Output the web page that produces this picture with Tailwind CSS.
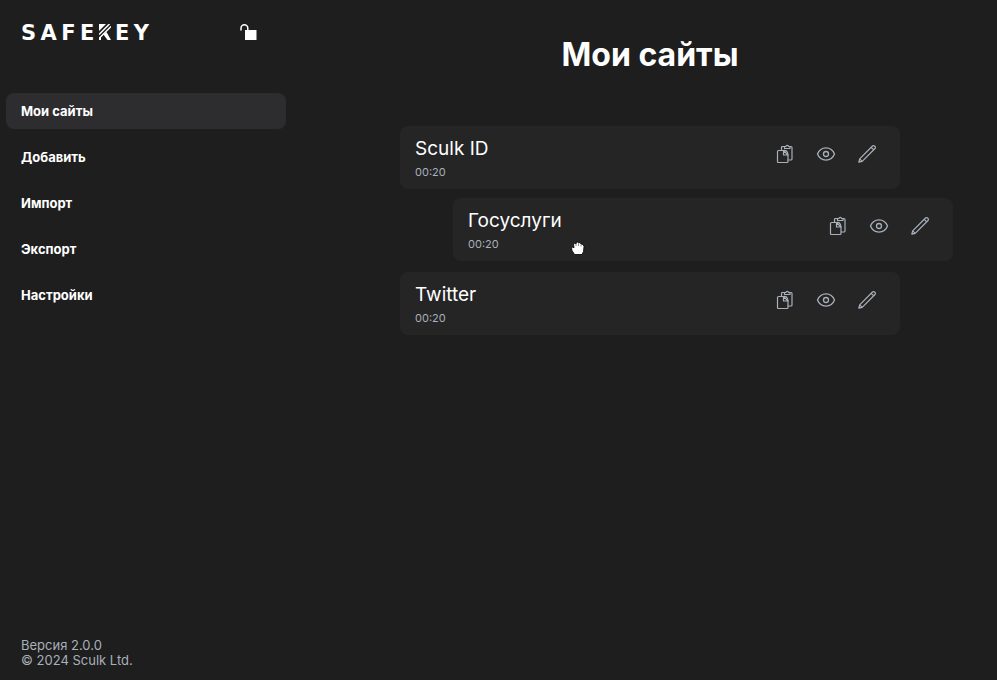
<!DOCTYPE html>
<html lang="ru">
<head>
<meta charset="utf-8">
<meta name="viewport" content="width=device-width, initial-scale=1">
<title>SafeKey</title>
<script src="https://cdn.jsdelivr.net/npm/@tailwindcss/browser@4"></script>
</head>
<body class="flex min-h-screen bg-[#1e1e1e] font-['Inter',sans-serif] text-white">
<svg class="hidden" aria-hidden="true">
  <symbol id="copy" viewBox="0 0 20 20" fill="none" stroke="currentColor" stroke-width="1.2" stroke-linejoin="round" stroke-linecap="round">
    <path d="M3.500 6.500H8.500L13 11V17.500Q13 18.500 12 18.500H3.500Q2.500 18.500 2.500 17.500V7.500Q2.500 6.500 3.500 6.500zM8.500 6.500V11H13"/>
    <path d="M6.500 6.300V3.500Q6.500 2.500 7.500 2.500H9.500M15 2.500h1q1 0 1 1V15q0 1-1 1H13.200M8.500 6.500Q11.500 6 12.500 8.500L13 11"/>
    <path d="M9.500 4.500V2.500h1.300a1.500 1.500 0 0 1 2.900 0H15v2z"/>
  </symbol>
  <symbol id="eye" viewBox="0 0 20 20" fill="none" stroke="currentColor" stroke-width="1.3">
    <path d="M1.500 10C3 6.200 6.200 3.900 10 3.900s7 2.300 8.500 6.100c-1.500 3.800-4.700 6.100-8.500 6.100S3 13.800 1.500 10z"/>
    <circle cx="10" cy="10" r="2.500"/>
  </symbol>
  <symbol id="pencil" viewBox="0 0 20 20" fill="none" stroke="currentColor" stroke-width="1.2" stroke-linejoin="round">
    <path d="M1.800 18.200l.9-3.400L15.500 2a1.400 1.400 0 0 1 2 0l.5.500a1.400 1.400 0 0 1 0 2L5.200 17.300zM14.200 3.300l2.500 2.500M2.700 14.800l2.500 2.500"/>
  </symbol>
</svg>

<aside class="flex w-[303px] shrink-0 flex-col pr-[17px] pl-1.5">
  <header class="flex h-[65px] items-center justify-between pt-0.5 pr-[29px] pl-[15px]">
    <a href="#" aria-label="SafeKey" class="flex w-32 items-baseline justify-between font-['DejaVu_Sans',sans-serif] text-[21px] leading-none font-bold">
      <span>S</span><span>A</span><span>F</span><span>E</span>
      <svg class="h-4 w-3" viewBox="0 0 12 16" fill="none" stroke="currentColor" aria-hidden="true">
        <path d="M0 0h7L0 7z" fill="currentColor" stroke="none"/>
        <path d="M0 10.500L10.500 0M0 14.500L12 2.500" stroke-width="1.500"/>
        <path d="M4.500 10.500l4 5.500H12L7.500 8z" fill="currentColor" stroke="none"/>
        <path d="M1 13v3" stroke-width="2"/>
      </svg>
      <span>E</span><span>Y</span>
    </a>
    <button type="button" aria-label="Заблокировать" class="cursor-pointer pb-0.5">
      <svg class="h-[17px] w-[17px]" viewBox="0 0 17 17" fill="none" aria-hidden="true">
        <path d="M1 6.500V4.200a3.400 3.400 0 0 1 6.800 0V8" stroke="currentColor" stroke-width="1.500"/>
        <path d="M5 6h11.500v10H5z" fill="currentColor"/>
      </svg>
    </button>
  </header>
  <nav class="mt-7 flex flex-col gap-2.5 text-[13px] leading-5 font-bold">
    <a href="#" aria-current="page" class="rounded-lg bg-[#2d2d2f] px-[15px] py-2">Мои сайты</a>
    <a href="#" class="rounded-lg px-[15px] py-2">Добавить</a>
    <a href="#" class="rounded-lg px-[15px] py-2">Импорт</a>
    <a href="#" class="rounded-lg px-[15px] py-2">Экспорт</a>
    <a href="#" class="rounded-lg px-[15px] py-2">Настройки</a>
  </nav>
  <footer class="mt-auto px-[15px] pb-3 text-[13px] leading-[15px] text-[#a9b0ba]">
    <p>Версия 2.0.0</p>
    <p>© 2024 Sculk Ltd.</p>
  </footer>
</aside>

<main class="flex min-w-0 flex-1 flex-col items-center pt-[35px]">
  <h1 class="text-[32px] leading-10 font-bold">Мои сайты</h1>
  <ul class="mt-[51px] flex w-full max-w-[500px] flex-col gap-2.5">
    <li class="flex h-[63px] items-center justify-between rounded-lg bg-[#252525] pr-[23px] pl-[15px]">
      <div><h2 class="text-[19px] leading-7">Sculk ID</h2><p class="text-[11px] leading-[18px] text-[#a9b0ba]">00:20</p></div>
      <div class="flex gap-[21px] pb-2 text-[#a9b0ba]">
        <button type="button" aria-label="Копировать"><svg class="size-5"><use href="#copy"/></svg></button>
        <button type="button" aria-label="Показать"><svg class="size-5"><use href="#eye"/></svg></button>
        <button type="button" aria-label="Изменить"><svg class="size-5"><use href="#pencil"/></svg></button>
      </div>
    </li>
    <li class="relative -top-px left-[53px] flex h-[63px] cursor-grabbing items-center justify-between rounded-lg bg-[#252525] pr-[23px] pl-[15px]">
      <div><h2 class="text-[19px] leading-7">Госуслуги</h2><p class="text-[11px] leading-[18px] text-[#a9b0ba]">00:20</p></div>
      <div class="flex gap-[21px] pb-2 text-[#a9b0ba]">
        <button type="button" aria-label="Копировать"><svg class="size-5"><use href="#copy"/></svg></button>
        <button type="button" aria-label="Показать"><svg class="size-5"><use href="#eye"/></svg></button>
        <button type="button" aria-label="Изменить"><svg class="size-5"><use href="#pencil"/></svg></button>
      </div>
      <svg class="absolute top-[43px] left-[118px] h-[14px] w-[14px]" viewBox="0 0 14 14" aria-hidden="true">
        <path d="M3.500 13.500L1 9.500 .5 6.500l1.500-.5 1 1-.5-4 1.500-1 1 1 .5-2h1.500L7.500 2l1.500-.5 1 1.500 2 .5 1 2-.5 5-1.500 3z" fill="#fff" stroke="#000" stroke-width=".8"/>
        <path d="M5 3v2M7.500 2.500V5M10 3.500V5.500" stroke="#555" stroke-width=".7"/>
      </svg>
    </li>
    <li class="flex h-[63px] items-center justify-between rounded-lg bg-[#252525] pr-[23px] pl-[15px]">
      <div><h2 class="text-[19px] leading-7">Twitter</h2><p class="text-[11px] leading-[18px] text-[#a9b0ba]">00:20</p></div>
      <div class="flex gap-[21px] pb-2 text-[#a9b0ba]">
        <button type="button" aria-label="Копировать"><svg class="size-5"><use href="#copy"/></svg></button>
        <button type="button" aria-label="Показать"><svg class="size-5"><use href="#eye"/></svg></button>
        <button type="button" aria-label="Изменить"><svg class="size-5"><use href="#pencil"/></svg></button>
      </div>
    </li>
  </ul>
</main>
</body>
</html>
